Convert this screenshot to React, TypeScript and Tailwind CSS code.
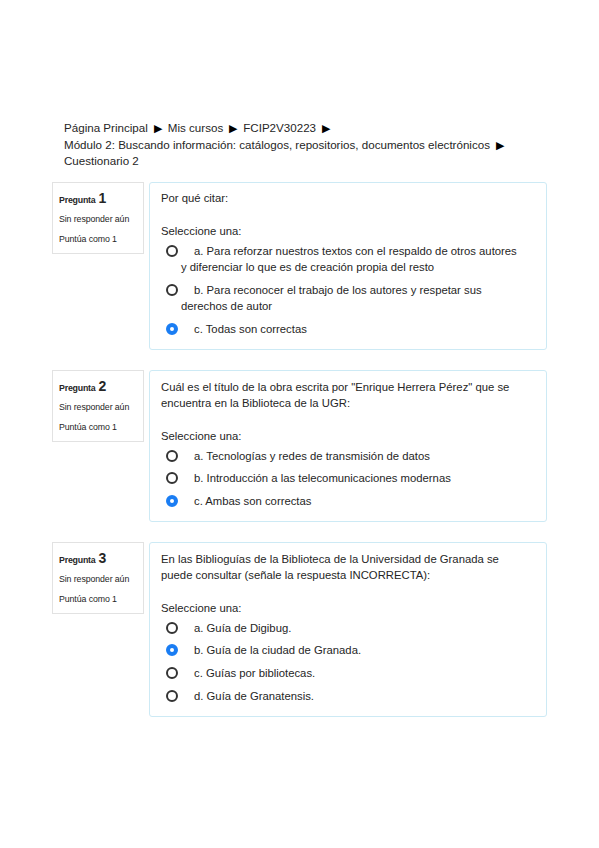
import React from "react";

type Opt = { text: string; checked?: boolean };
type Q = { n: number; text: string[]; opts: Opt[] };

const questions: Q[] = [
  {
    n: 1,
    text: ["Por qué citar:"],
    opts: [
      { text: "a. Para reforzar nuestros textos con el respaldo de otros autores y diferenciar lo que es de creación propia del resto" },
      { text: "b. Para reconocer el trabajo de los autores y respetar sus derechos de autor" },
      { text: "c. Todas son correctas", checked: true },
    ],
  },
  {
    n: 2,
    text: [
      "Cuál es el título de la obra escrita por \"Enrique Herrera Pérez\" que se",
      "encuentra en la Biblioteca de la UGR:",
    ],
    opts: [
      { text: "a. Tecnologías y redes de transmisión de datos" },
      { text: "b. Introducción a las telecomunicaciones modernas" },
      { text: "c. Ambas son correctas", checked: true },
    ],
  },
  {
    n: 3,
    text: [
      "En las Biblioguías de la Biblioteca de la Universidad de Granada se",
      "puede consultar (señale la respuesta INCORRECTA):",
    ],
    opts: [
      { text: "a. Guía de Digibug." },
      { text: "b. Guía de la ciudad de Granada.", checked: true },
      { text: "c. Guías por bibliotecas." },
      { text: "d. Guía de Granatensis." },
    ],
  },
];

function Radio({ checked }: { checked?: boolean }) {
  return checked ? (
    <span className="inline-block align-[-2px] w-[12px] h-[12px] rounded-full border-[4px] border-[#1a7df3] bg-white mr-[16px]" />
  ) : (
    <span className="inline-block align-[-2px] w-[12px] h-[12px] rounded-full border-[2px] border-[#333] bg-white mr-[16px]" />
  );
}

function Arrow() {
  return <span className="inline-block mx-[6px] text-[11px] leading-[16px] text-black">▶</span>;
}

export default function App() {
  return (
    <div
      className="w-[599px] min-h-[848px] bg-white text-[#262626] pt-[120px] px-[52px]"
      style={{ fontFamily: '"Liberation Sans", Arial, sans-serif' }}
    >
      <div className="pl-[12px] text-[11.6px] leading-[16.5px] mb-[12px]">
        <div>
          Página Principal<Arrow />Mis cursos<Arrow />FCIP2V30223<Arrow />
        </div>
        <div>
          Módulo 2: Buscando información: catálogos, repositorios, documentos electrónicos<Arrow />
        </div>
        <div>Cuestionario 2</div>
      </div>

      <div className="flex flex-col gap-[20px]">
        {questions.map((q) => (
          <div key={q.n} className="flex items-start gap-[5px]">
            <div className="w-[92px] shrink-0 border border-[#e2e2e2] px-[6px] pt-[7px] pb-[9px]">
              <div className="flex items-baseline leading-[16px]">
                <span className="text-[8.8px] font-bold tracking-[-0.2px]">Pregunta</span>
                <span className="text-[14px] font-bold ml-[3px]">{q.n}</span>
              </div>
              <div className="text-[8.8px] leading-[10px] mt-[6px] tracking-[-0.1px]">Sin responder aún</div>
              <div className="text-[8.8px] leading-[10px] mt-[10px] tracking-[-0.1px]">Puntúa como 1</div>
            </div>
            <div className="flex-1 border border-[#cdeaf5] rounded-[3px] pl-[11px] pr-[24px] pt-[7.5px] pb-[11.5px] text-[11.3px] leading-[16.5px]">
              {q.text.map((t, i) => (
                <div key={i}>{t}</div>
              ))}
              <div className="mt-[16.5px] mb-[3px]">Seleccione una:</div>
              <div className="flex flex-col gap-[6.3px]">
                {q.opts.map((o, i) => (
                  <div key={i} className="pl-[20px] -indent-[15px]">
                    <Radio checked={o.checked} />
                    {o.text}
                  </div>
                ))}
              </div>
            </div>
          </div>
        ))}
      </div>
    </div>
  );
}
